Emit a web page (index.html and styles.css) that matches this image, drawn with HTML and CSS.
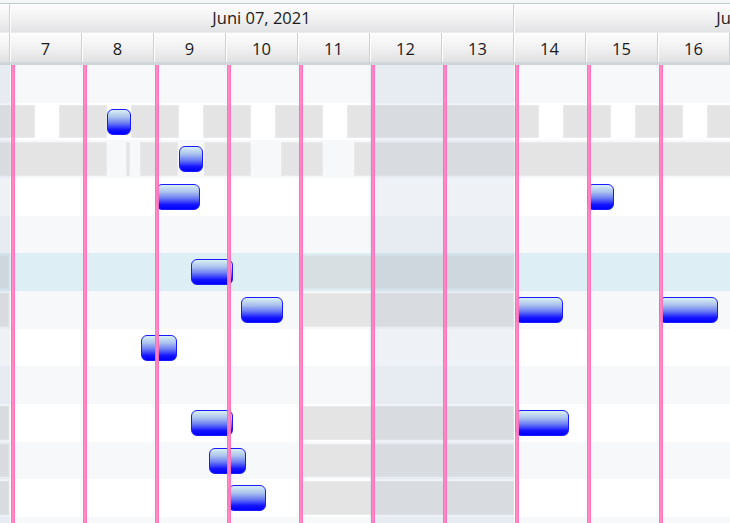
FILE: index.html
```html
<!DOCTYPE html>
<html lang="de">
<head>
<meta charset="utf-8">
<title>Scheduler</title>
<link rel="stylesheet" href="styles.css">
</head>
<body>
<div class="sched">
  <div class="hdr">
    <div class="hdr-top"></div>
    <div class="hdr-months">
      <div class="mcell"></div>
      <div class="mcell">Juni 07, 2021</div>
      <div class="mcell">Juni 14, 2021</div>
    </div>
    <div class="hdr-days">
      <div class="dcell"></div>
      <div class="dcell">7</div>
      <div class="dcell">8</div>
      <div class="dcell">9</div>
      <div class="dcell">10</div>
      <div class="dcell">11</div>
      <div class="dcell">12</div>
      <div class="dcell">13</div>
      <div class="dcell">14</div>
      <div class="dcell">15</div>
      <div class="dcell">16</div>
    </div>
  </div>

  <div class="grid">
    <div class="weekend" style="left:0;width:10px"></div>
    <div class="weekend" style="left:370px;width:144px"></div>

    <div class="now" style="left:11px"></div>
    <div class="now" style="left:83px"></div>
    <div class="now" style="left:155px"></div>
    <div class="now" style="left:227px"></div>
    <div class="now" style="left:299px"></div>
    <div class="now" style="left:371px"></div>
    <div class="now" style="left:443px"></div>
    <div class="now" style="left:515px"></div>
    <div class="now" style="left:587px"></div>
    <div class="now" style="left:659px"></div>

    <div class="row alt"></div>

    <div class="row">
      <div class="off" style="left:-2px;width:37px"></div>
      <div class="off" style="left:59px;width:48px"></div>
      <div class="off" style="left:131px;width:48px"></div>
      <div class="off" style="left:203px;width:48px"></div>
      <div class="off" style="left:275px;width:48px"></div>
      <div class="off" style="left:347px;width:192px"></div>
      <div class="off" style="left:563px;width:48px"></div>
      <div class="off" style="left:635px;width:48px"></div>
      <div class="off" style="left:707px;width:48px"></div>
      <div class="appt" style="left:107px;width:24px"></div>
    </div>

    <div class="row alt">
      <div class="off" style="left:-2px;width:109px"></div>
      <div class="off" style="left:126px;width:4px"></div>
      <div class="off" style="left:140px;width:38px"></div>
      <div class="off" style="left:204px;width:47px"></div>
      <div class="off" style="left:281px;width:42px"></div>
      <div class="off" style="left:354px;width:400px"></div>
      <div class="appt" style="left:179px;width:24px"></div>
    </div>

    <div class="row">
      <div class="appt" style="left:156px;width:44px"></div>
      <div class="appt" style="left:587px;width:27px"></div>
    </div>

    <div class="row alt"></div>

    <div class="row sel">
      <div class="off" style="left:-2px;width:11px"></div>
      <div class="off" style="left:303px;width:211px"></div>
      <div class="appt" style="left:191px;width:42px"></div>
    </div>

    <div class="row alt">
      <div class="off" style="left:-2px;width:11px"></div>
      <div class="off" style="left:303px;width:211px"></div>
      <div class="appt" style="left:241px;width:42px"></div>
      <div class="appt" style="left:515px;width:48px"></div>
      <div class="appt" style="left:659px;width:59px"></div>
    </div>

    <div class="row">
      <div class="appt" style="left:141px;width:36px"></div>
    </div>

    <div class="row alt"></div>

    <div class="row">
      <div class="off" style="left:-2px;width:11px"></div>
      <div class="off" style="left:303px;width:211px"></div>
      <div class="appt" style="left:191px;width:42px"></div>
      <div class="appt" style="left:515px;width:54px"></div>
    </div>

    <div class="row alt">
      <div class="off" style="left:-2px;width:11px"></div>
      <div class="off" style="left:303px;width:211px"></div>
      <div class="appt" style="left:209px;width:37px"></div>
    </div>

    <div class="row">
      <div class="off" style="left:-2px;width:11px"></div>
      <div class="off" style="left:303px;width:211px"></div>
      <div class="appt" style="left:228px;width:38px"></div>
    </div>

    <div class="row alt"></div>
  </div>
</div>
</body>
</html>
```

FILE: styles.css
```css
html, body {
  margin: 0;
  padding: 0;
  background: #ffffff;
}

body {
  font-family: "Open Sans", "Noto Sans", "Liberation Sans", sans-serif;
  color: #1b1b1b;
}

.sched {
  width: 730px;
  height: 523px;
  overflow: hidden;
  display: flex;
  flex-direction: column;
}

/* ---------- header ---------- */
.hdr {
  flex: 0 0 auto;
  display: flex;
  flex-direction: column;
}

.hdr-top {
  height: 3px;
  background: #f5f6f8;
  border-bottom: 1px solid #c3c8d1;
}

.hdr-months {
  display: flex;
  height: 28px;
  margin-left: -494px;
  border-bottom: 1px solid #eceded;
}

.mcell {
  flex: 0 0 504px;
  box-sizing: border-box;
  border-right: 1px solid #cfd1d3;
  box-shadow: inset 1px 0 0 #ffffff;
  background: linear-gradient(#fdfdfd, #f3f3f4 45%, #e2e3e4);
  font-size: 16.5px;
  line-height: 28px;
  text-align: center;
  white-space: nowrap;
}

.hdr-days {
  display: flex;
  height: 29px;
  margin-left: -62px;
  border-bottom: 3px solid #d1d5d8;
}

.dcell {
  flex: 0 0 72px;
  box-sizing: border-box;
  border-right: 1px solid #cfd1d3;
  box-shadow: inset 1px 0 0 #ffffff;
  background: linear-gradient(#fdfdfd, #f3f3f4 45%, #e0e1e2);
  font-size: 16.5px;
  line-height: 31px;
  text-align: center;
}

/* ---------- body grid ---------- */
.grid {
  position: relative;
  flex: 1 1 auto;
  display: flex;
  flex-direction: column;
}

.row {
  position: relative;
  flex: 0 0 37.67px;
  background: #ffffff;
}

.row.alt {
  background: #f7f8fa;
}

.row.sel {
  background: #ddeef4;
}

.off {
  position: absolute;
  top: 2px;
  bottom: 2px;
  box-sizing: border-box;
  background: #e4e4e4;
  border: 1px solid #eaeaea;
}

.row.sel .off {
  background: #d8dfe2;
  border-color: #dde5e8;
}

.weekend {
  position: absolute;
  top: 0;
  bottom: 0;
  z-index: 1;
  background: rgba(170, 185, 210, 0.2);
  pointer-events: none;
}

.appt {
  position: absolute;
  top: 6px;
  height: 26px;
  box-sizing: border-box;
  z-index: 2;
  border: 1.5px solid #1a1aff;
  border-radius: 6px;
  background: linear-gradient(#d9f1f2 0%, #a9c0ee 30%, #6b7cf3 55%, #1414ff 82%, #0000ff 100%);
}

.now {
  position: absolute;
  top: 0;
  bottom: 0;
  width: 4px;
  z-index: 3;
  background: linear-gradient(90deg, #ff62b0, #ff8fca 50%, #ff62b0);
  opacity: 0.95;
}
```
